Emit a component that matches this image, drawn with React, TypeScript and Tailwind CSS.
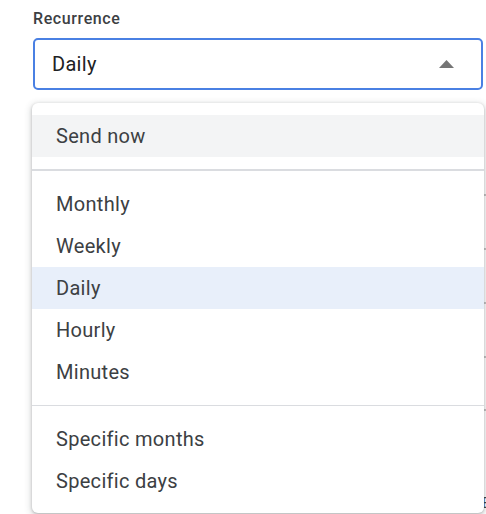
import React from "react";

const group1 = ["Monthly", "Weekly", "Daily", "Hourly", "Minutes"];
const group2 = ["Specific months", "Specific days"];

function Item({ label, bg }: { label: string; bg?: string }) {
  return (
    <div className={`h-[42px] flex items-center pl-6 text-[20px] tracking-[0.3px] text-[#3c4043] ${bg ?? ""}`}>
      {label}
    </div>
  );
}

export default function App() {
  return (
    <div
      className="relative w-[486px] h-[514px] bg-white overflow-hidden"
      style={{ fontFamily: "Roboto, 'Liberation Sans', sans-serif" }}
    >
      <div className="pl-[33px] pt-[9px]">
        <div className="text-[16px] font-medium tracking-[0.6px] text-[#3c4043] leading-[20px]">Recurrence</div>
        <div className="mt-[9px] w-[450px] h-[52px] border-2 border-[#4a80e3] rounded-[5px] flex items-center justify-between pl-[17px] pr-[27px]">
          <span className="text-[20px] tracking-[0.3px] text-[#202124]">Daily</span>
          <svg width="15" height="8" viewBox="0 0 15 8">
            <polygon points="0,8 7.5,0 15,8" fill="#757575" />
          </svg>
        </div>
        {/* underlying content peeking at right */}
        <div className="mt-[53px] flex flex-col">
          <div className="h-[53px] border-b-2 border-[#c4c4c4]" />
          <div className="h-[54px] border-b-2 border-[#c4c4c4]" />
          <div className="h-[54px] border-b-2 border-[#c4c4c4]" />
          <div className="h-[54px] border-b-2 border-[#c4c4c4]" />
          <div className="h-[53px] border-b-2 border-[#c4c4c4]" />
          <div className="h-[106px] flex items-end justify-end pb-[6px]">
            <span className="text-[14px] leading-[16px] text-[#3c4043] -mr-[4px]">E</span>
          </div>
        </div>
      </div>

      <div className="absolute left-[32px] top-[103px] w-[452px] h-[410px] bg-white rounded-[6px] shadow-[0_1px_3px_rgba(60,64,67,0.3),0_2px_6px_2px_rgba(60,64,67,0.15)]">
        <div className="py-3">
          <Item label="Send now" bg="bg-[#f3f4f5]" />
        </div>
        <div className="h-[2px] bg-[#dadce0]" />
        <div className="py-3">
          {group1.map((l) => (
            <Item key={l} label={l} bg={l === "Daily" ? "bg-[#e8effa]" : ""} />
          ))}
        </div>
        <div className="h-px bg-[#dadce0]" />
        <div className="py-3">
          {group2.map((l) => (
            <Item key={l} label={l} />
          ))}
        </div>
      </div>
    </div>
  );
}
